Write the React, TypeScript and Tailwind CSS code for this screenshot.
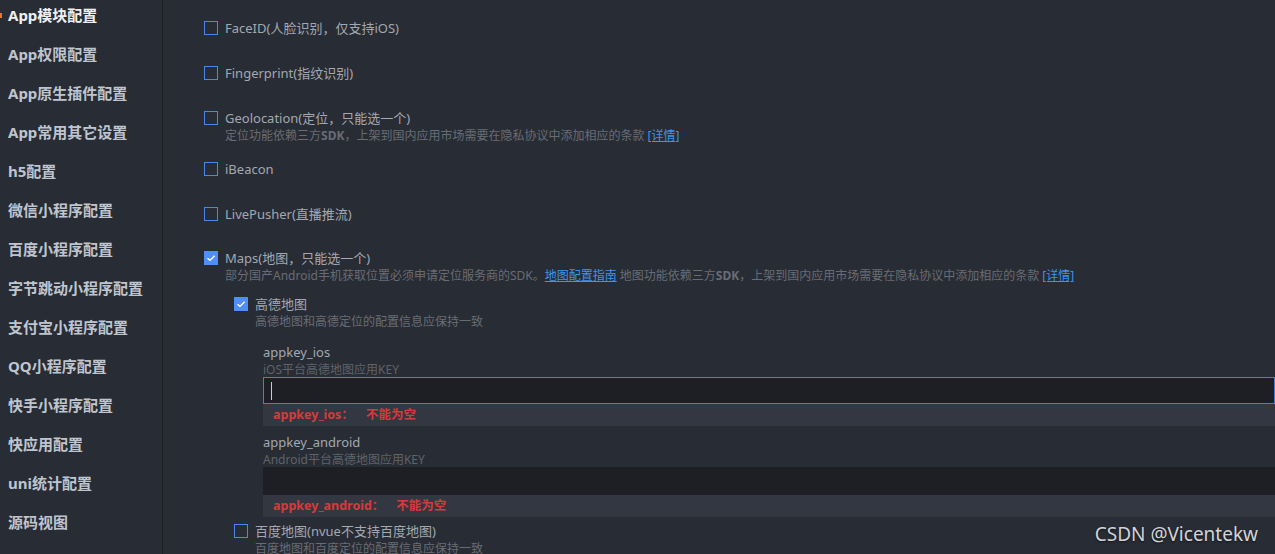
import type { ReactNode } from "react";

const NAV = [
  "App模块配置",
  "App权限配置",
  "App原生插件配置",
  "App常用其它设置",
  "h5配置",
  "微信小程序配置",
  "百度小程序配置",
  "字节跳动小程序配置",
  "支付宝小程序配置",
  "QQ小程序配置",
  "快手小程序配置",
  "快应用配置",
  "uni统计配置",
  "源码视图",
];

function Checkbox({ checked }: { checked?: boolean }) {
  if (checked) {
    return (
      <span className="flex h-[14px] w-[14px] shrink-0 items-center justify-center bg-[#4f8ff7]">
        <svg viewBox="0 0 14 14" className="h-[14px] w-[14px]" aria-hidden>
          <path
            d="M3.5 7.2 L6 9.4 L10.6 4.8"
            fill="none"
            stroke="#ffffff"
            strokeWidth="1.4"
          />
        </svg>
      </span>
    );
  }
  return (
    <span className="h-[14px] w-[14px] shrink-0 border-[1.5px] border-[#4a86ec]" />
  );
}

function Link({ children }: { children: ReactNode }) {
  return <span className="text-[#3d95ea] underline">{children}</span>;
}

function Option({
  label,
  desc,
  checked,
  className,
}: {
  label: string;
  desc?: ReactNode;
  checked?: boolean;
  className?: string;
}) {
  return (
    <div className={className}>
      <div className="flex h-5 items-center gap-[7px]">
        <Checkbox checked={checked} />
        <span className="text-[13px] leading-5 text-[#a3a8b1]">{label}</span>
      </div>
      {desc ? (
        <p className="pl-[21px] text-[12px] leading-4 whitespace-nowrap text-[#686c75]">
          {desc}
        </p>
      ) : null}
    </div>
  );
}

function KeyField({
  name,
  desc,
  focused,
  className,
}: {
  name: string;
  desc: string;
  focused?: boolean;
  className?: string;
}) {
  return (
    <div className={className}>
      <p className="text-[13px] leading-5 text-[#a3a8b1]">{name}</p>
      <p className="text-[12px] leading-[15px] text-[#5f636b]">{desc}</p>
      <div
        className={
          focused
            ? "flex h-[27px] items-center border border-[#3f7fe8] bg-[#1e1f24] pl-[7px]"
            : "flex h-[28px] items-center border border-[#1e1f24] bg-[#1e1f24] pl-[7px]"
        }
      >
        {focused ? <span className="h-[18px] w-px bg-[#c8ccd2]" /> : null}
      </div>
      <div className="flex h-[22px] items-center gap-3 bg-[#333741] pl-[10px] text-[12.5px] font-bold text-[#d63b3b]">
        <span>{name}：</span>
        <span>不能为空</span>
      </div>
    </div>
  );
}

export default function App() {
  return (
    <div className="relative flex h-[554px] w-[1275px] overflow-hidden bg-[#282c34] font-['Noto_Sans','Noto_Sans_CJK_SC',sans-serif]">
      <aside className="relative w-[163px] shrink-0 border-r border-[#1c1e23]">
        <span className="absolute left-0 top-[13px] h-[5px] w-[2px] bg-[#e8772e]" />
        <ul className="flex flex-col gap-[9px] pl-2">
          {NAV.map((item, i) => (
            <li
              key={item}
              className={
                i === 0
                  ? "h-[30px] text-[15px] leading-[30px] font-bold whitespace-nowrap text-[#eef0f3]"
                  : "h-[30px] text-[15px] leading-[30px] font-bold whitespace-nowrap text-[#bfc5cf]"
              }
            >
              {item}
            </li>
          ))}
        </ul>
      </aside>

      <main className="min-w-0 flex-1 pl-[41px] pt-[18px]">
        <Option label="FaceID(人脸识别，仅支持iOS)" className="mb-[25px]" />
        <Option label="Fingerprint(指纹识别)" className="mb-[25px]" />
        <Option
          label="Geolocation(定位，只能选一个)"
          className="mb-[15px]"
          desc={
            <>
              定位功能依赖三方<b>SDK</b>，上架到国内应用市场需要在隐私协议中添加相应的条款{" "}
              <Link>[详情]</Link>
            </>
          }
        />
        <Option label="iBeacon" className="mb-[25px]" />
        <Option label="LivePusher(直播推流)" className="mb-6" />
        <Option
          label="Maps(地图，只能选一个)"
          checked
          desc={
            <>
              部分国产Android手机获取位置必须申请定位服务商的SDK。
              <Link>地图配置指南</Link> 地图功能依赖三方<b>SDK</b>
              ，上架到国内应用市场需要在隐私协议中添加相应的条款{" "}
              <Link>[详情]</Link>
            </>
          }
        />

        <div className="pl-[30px] pt-[10px]">
          <Option
            label="高德地图"
            checked
            desc="高德地图和高德定位的配置信息应保持一致"
          />
          <div className="pl-[29px] pt-3">
            <KeyField name="appkey_ios" desc="iOS平台高德地图应用KEY" focused />
            <KeyField
              name="appkey_android"
              desc="Android平台高德地图应用KEY"
              className="pt-[6px]"
            />
          </div>
          <Option
            label="百度地图(nvue不支持百度地图)"
            className="pt-[4px]"
            desc="百度地图和百度定位的配置信息应保持一致"
          />
        </div>
      </main>

      <span className="absolute bottom-[6px] right-[17px] text-[19px] text-[#d2d4d8] [text-shadow:0_1px_2px_rgba(0,0,0,0.6)]">
        CSDN @Vicentekw
      </span>
    </div>
  );
}
